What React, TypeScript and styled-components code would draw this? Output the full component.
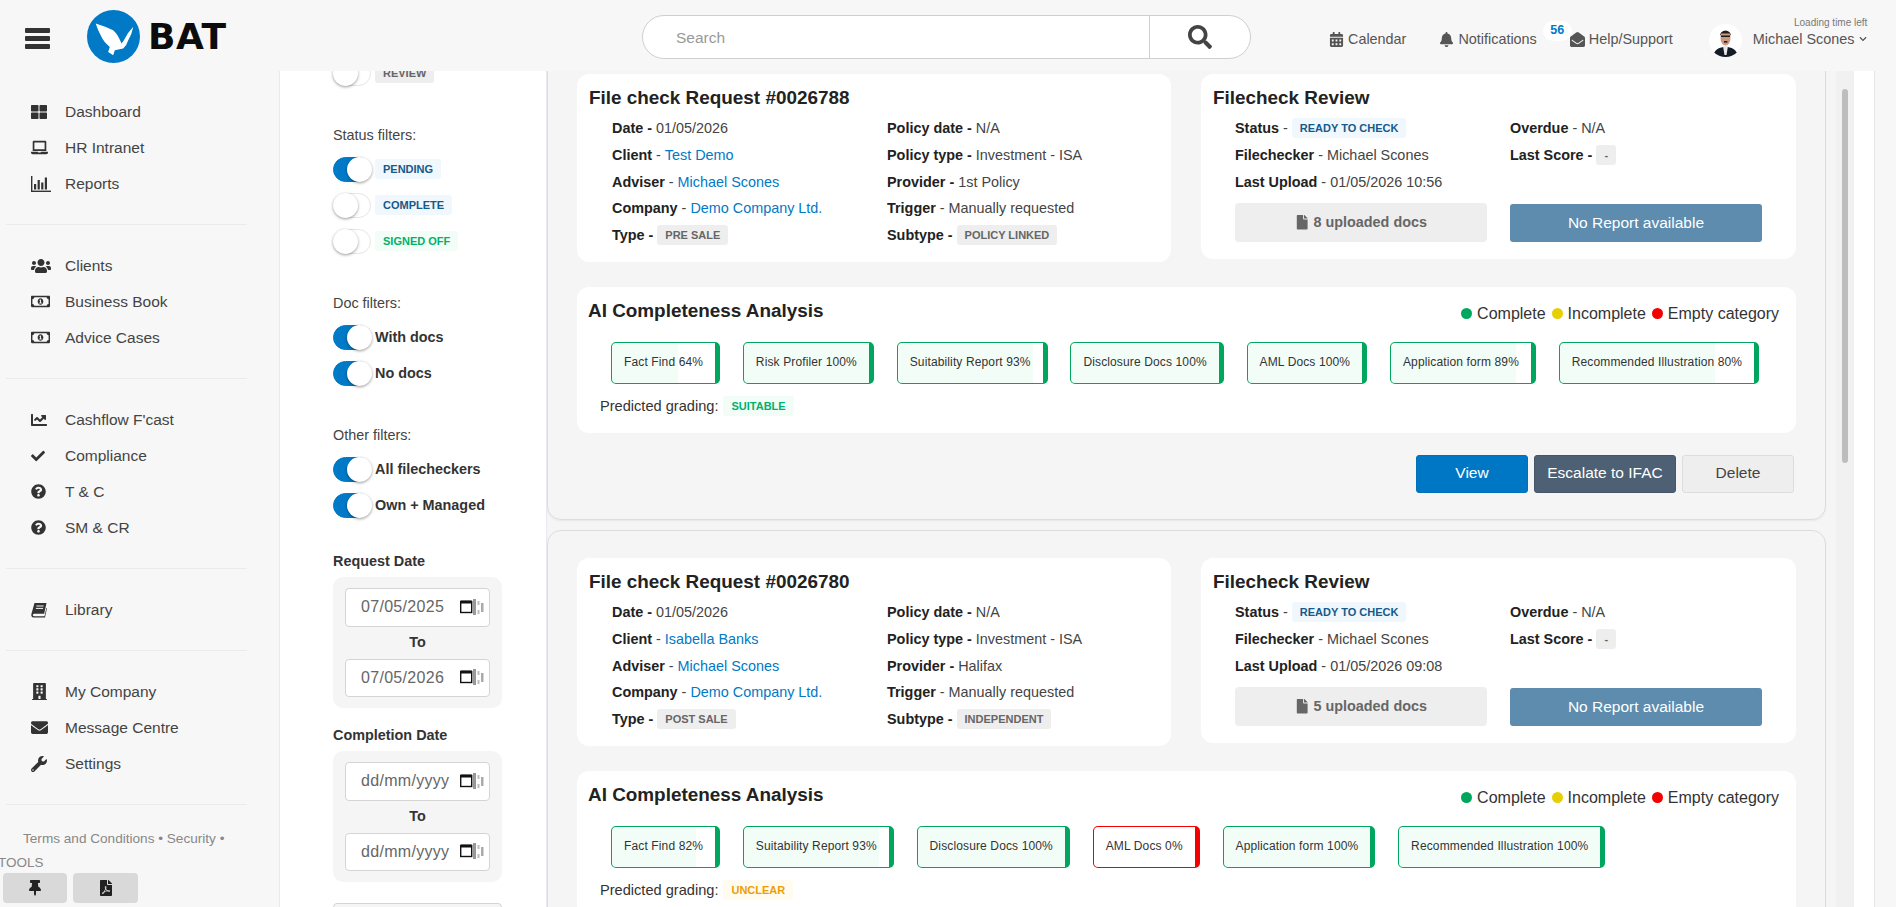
import React from "react";
import styled, { createGlobalStyle } from "styled-components";
import {
  FaThLarge,
  FaLaptop,
  FaUsers,
  FaRegMoneyBillAlt,
  FaChartLine,
  FaCheck,
  FaQuestionCircle,
  FaBuilding,
  FaEnvelope,
  FaWrench,
  FaThumbtack,
  FaFilePdf,
  FaSearch,
  FaCalendarAlt,
  FaBell,
  FaEnvelopeOpen,
  FaFile,
  FaChevronDown,
} from "react-icons/fa";

const GlobalStyle = createGlobalStyle`
  html, body {
    margin: 0;
    height: 100%;
    overflow: hidden;
    background: #f7f7f7;
    color: #333;
    font-family: "Liberation Sans", Arial, sans-serif;
  }
  * { box-sizing: border-box; }
`;

type Tone = "blue" | "green" | "grey" | "amber";

const toneColors: Record<Tone, { bg: string; fg: string }> = {
  blue: { bg: "#f0f7fd", fg: "#155a8a" },
  green: { bg: "#f2fdf7", fg: "#00b06b" },
  grey: { bg: "#eeeeee", fg: "#666666" },
  amber: { bg: "#fffbee", fg: "#eb9e08" },
};

const chipColors = { green: "#00a65d", red: "#f50000" };

function ReportsIcon() {
  return (
    <svg width="20" height="16" viewBox="0 0 20 16" fill="currentColor">
      <rect x="0" y="0" width="1.4" height="16" />
      <rect x="0" y="14.6" width="20" height="1.4" />
      <rect x="3" y="8" width="2.2" height="5.5" />
      <rect x="6.6" y="4" width="2.2" height="9.5" />
      <rect x="10.2" y="6.5" width="2.2" height="7" />
      <rect x="13.8" y="1.5" width="2.2" height="12" />
    </svg>
  );
}

function BookIcon() {
  return (
    <svg width="16" height="16" viewBox="0 0 16 16" fill="currentColor">
      <path d="M3.5 1 L15.5 1 L13.2 11.8 L3 11.8 C1.4 11.8 1.4 14.2 3 14.2 L13.5 14.2 L15.4 6 L16 6 L14 15.5 L2.8 15.5 C0.6 15.5 0 13.8 0.4 12 Z" />
      <path d="M5.4 4 H12.6 M4.9 6.4 H12.1" stroke="#f7f7f7" strokeWidth="1" />
    </svg>
  );
}

function LogoMark() {
  return (
    <svg width="53" height="53" viewBox="0 0 158 158">
      <circle cx="79" cy="79" r="79" fill="#0079c6" />
      <path
        d="M26 40 Q52 48 78 60 Q92 72 103 100 L110 90 Q122 66 138 50 Q134 72 123 90 Q118 106 108 115 L83 120 L78 135 L63 125 L68 110 Q50 96 43 80 Q32 60 26 40 Z"
        fill="#ffffff"
      />
    </svg>
  );
}

function Portrait() {
  return (
    <svg width="33" height="33" viewBox="0 0 33 33">
      <clipPath id="portrait-clip">
        <circle cx="16.5" cy="16.5" r="16.5" />
      </clipPath>
      <g clipPath="url(#portrait-clip)">
        <rect width="33" height="33" fill="#ffffff" />
        <path d="M4 33 C5 25 11 23 16.5 23 C22 23 28 25 29 33 Z" fill="#141c26" />
        <path d="M14 22 L19 22 L17.5 31 L15.5 31 Z" fill="#e8e8e8" />
        <ellipse cx="16.5" cy="14" rx="5" ry="7.5" fill="#c99a80" />
        <path d="M11 12 C11 5 22 5 22 12 L20.5 9.5 L12.5 9.5 Z" fill="#2a1c16" />
        <rect x="12" y="11.5" width="9" height="1.5" fill="#1a1a1a" />
        <rect x="15" y="17" width="3.4" height="1.6" fill="#301812" />
      </g>
    </svg>
  );
}

function CalendarGlyph() {
  return (
    <svg width="24" height="17" viewBox="0 0 24 17">
      <rect x="0.7" y="2.5" width="11" height="11" fill="none" stroke="#111" strokeWidth="1.4" />
      <rect x="0.7" y="1.5" width="11" height="3" fill="#111" />
      <rect x="13" y="0" width="3" height="16" fill="#999" />
      <rect x="17.5" y="2" width="2" height="4" fill="#bbb" />
      <rect x="17.5" y="11" width="2" height="4" fill="#bbb" />
      <rect x="21" y="4" width="2.5" height="9" fill="#aaa" />
    </svg>
  );
}

const Page = styled.div`
  display: flex;
  flex-direction: column;
  height: 100vh;
  overflow: hidden;
`;

const Header = styled.header`
  display: grid;
  grid-template-columns: 642px 609px 1fr;
  height: 71px;
  flex: none;
`;

const Brand = styled.div`
  display: flex;
  align-items: flex-start;
  padding: 10px 0 0 25px;
`;

const Burger = styled.button`
  display: flex;
  flex-direction: column;
  gap: 3px;
  width: 25px;
  margin-top: 18px;
  padding: 0;
  border: 0;
  background: none;

  span {
    height: 5px;
    background: #333;
    border-radius: 1px;
  }
`;

const LogoLink = styled.div`
  display: flex;
  margin-left: 37px;
`;

const LogoWord = styled.span`
  margin: 6px 0 0 8px;
  font-family: "DejaVu Sans", sans-serif;
  font-size: 36px;
  letter-spacing: 0.5px;
  line-height: 42px;
  font-weight: 700;
  color: #0c0c0c;
`;

const SearchBar = styled.div`
  display: flex;
  height: 44px;
  margin-top: 15px;
  border: 1px solid #cfcfcf;
  border-radius: 22px;
  background: #fff;
`;

const SearchField = styled.div`
  flex: 1;
  display: flex;
  align-items: center;
  padding: 1px 0 0 33px;
  font-size: 15.5px;
  color: #999;
`;

const SearchButton = styled.div`
  display: flex;
  align-items: center;
  justify-content: center;
  width: 101px;
  border-left: 1px solid #cfcfcf;
  color: #444;
  font-size: 24px;
`;

const TopNav = styled.nav`
  display: flex;
  align-items: flex-start;
  gap: 33px;
  padding: 29px 0 0 78px;
`;

const TopLink = styled.a`
  position: relative;
  display: flex;
  align-items: center;
  gap: 4px;
  font-size: 14.4px;
  line-height: 20px;
  color: #555;

  svg {
    font-size: 15px;
  }
`;

const CountBadge = styled.span`
  position: absolute;
  top: -8px;
  right: -35px;
  width: 29px;
  height: 20px;
  border-radius: 10px;
  background: #fff;
  text-align: center;
  font-size: 12.5px;
  font-weight: 700;
  line-height: 19px;
  color: #0079c6;
`;

const UserBox = styled.div`
  display: flex;
  align-items: flex-start;
  gap: 11px;
  margin: -5px 0 0 3px;
`;

const UserText = styled.div`
  display: flex;
  flex-direction: column;
  align-items: flex-end;
  margin-top: -7px;
`;

const LoadingNote = styled.span`
  font-size: 10px;
  line-height: 12px;
  color: #777;
`;

const UserName = styled.span`
  display: flex;
  align-items: center;
  gap: 5px;
  font-size: 14.4px;
  line-height: 20px;
  color: #555;

  svg {
    font-size: 8px;
  }
`;

const Body = styled.div`
  flex: 1;
  display: flex;
  min-height: 0;
`;

const Sidebar = styled.aside`
  display: flex;
  flex-direction: column;
  width: 279px;
  flex: none;
`;

const SideNav = styled.div`
  flex: 1;
  min-height: 0;
  overflow: hidden;
  padding-top: 22px;
`;

const NavSection = styled.div`
  margin-right: 32px;
  margin-left: 6px;
  padding-bottom: 23px;
  margin-bottom: 22px;
  border-bottom: 1px solid #ebebeb;
`;

const NavRow = styled.a`
  display: flex;
  align-items: center;
  height: 36px;
  padding: 1px 0 0 25px;
  font-size: 15.5px;
  color: #444;
`;

const NavIcon = styled.span<{ $size: number }>`
  display: flex;
  align-items: center;
  width: 34px;
  flex: none;
  font-size: ${(p) => p.$size}px;
  color: #333;
`;

const SideTerms = styled.p`
  margin: 0;
  padding: 0 40px 0 23px;
  font-size: 13.6px;
  line-height: 24px;
  color: #888;
`;

const Tools = styled.div`
  height: 54px;
  flex: none;
`;

const ToolsLabel = styled.div`
  margin-left: -2px;
  font-size: 13.5px;
  line-height: 20px;
  color: #888;
`;

const ToolRow = styled.div`
  display: flex;
  gap: 6px;
  padding-left: 3px;
`;

const ToolButton = styled.button<{ $width: number }>`
  display: flex;
  align-items: center;
  justify-content: center;
  width: ${(p) => p.$width}px;
  height: 30px;
  border: 0;
  border-radius: 4px;
  background: #d9d9d9;
  color: #222;
  font-size: 16px;
`;

const FilterPanel = styled.section`
  width: 268px;
  flex: none;
  overflow: hidden;
  padding-left: 53px;
  background: #fff;
  border-left: 1px solid #e8eaef;
  border-right: 1px solid #e8eaef;
`;

const FilterScroll = styled.div`
  display: flex;
  flex-direction: column;
  width: 169px;
  margin-top: -16px;
`;

const FilterTitle = styled.div<{ $gap: number }>`
  margin: ${(p) => p.$gap}px 0 6px;
  font-size: 14.4px;
  line-height: 20px;
  color: #444;
`;

const FilterRow = styled.div`
  display: flex;
  align-items: center;
  gap: 4px;
  height: 36px;
  font-size: 14.4px;
  font-weight: 700;
  color: #333;
  white-space: nowrap;
`;

const Switch = styled.span<{ $on?: boolean }>`
  position: relative;
  display: block;
  width: 38px;
  height: 25px;
  flex: none;
  border-radius: 13px;
  border: 1px solid ${(p) => (p.$on ? "#0079c6" : "#e6e6e6")};
  background: ${(p) => (p.$on ? "#0079c6" : "#fff")};

  &::after {
    content: "";
    position: absolute;
    top: -1px;
    left: ${(p) => (p.$on ? "13px" : "-1px")};
    width: 25px;
    height: 25px;
    border-radius: 50%;
    background: #fff;
    box-shadow: 0 1px 3px rgba(0, 0, 0, 0.4);
  }
`;

const Pill = styled.span<{ $tone: Tone }>`
  display: inline-flex;
  align-items: center;
  height: 20px;
  padding: 0 8px;
  border-radius: 3px;
  background: ${(p) => toneColors[p.$tone].bg};
  color: ${(p) => toneColors[p.$tone].fg};
  font-size: 11px;
  font-weight: 700;
`;

const DateTitle = styled.div<{ $gap: number }>`
  margin: ${(p) => p.$gap}px 0 6px;
  font-size: 14.4px;
  line-height: 20px;
  font-weight: 700;
  color: #333;
`;

const DateBox = styled.div`
  display: flex;
  flex-direction: column;
  height: 131px;
  padding: 11px 12px;
  border-radius: 10px;
  background: #f5f5f5;
`;

const DateField = styled.div`
  display: flex;
  align-items: center;
  justify-content: space-between;
  height: 38.5px;
  padding: 0 5px 0 15px;
  border: 1px solid #d4d4d4;
  border-radius: 4px;
  background: #fff;
  font-size: 16px;
  letter-spacing: 0.3px;
  color: #666;
`;

const DateTo = styled.div`
  height: 32px;
  text-align: center;
  font-size: 14.4px;
  font-weight: 700;
  line-height: 31px;
  color: #333;
`;

const NextField = styled.div`
  height: 40px;
  margin-top: 21px;
  border: 1px solid #d4d4d4;
  border-radius: 4px;
  background: #f5f5f5;
`;

const Main = styled.main`
  flex: 1;
  min-width: 0;
  overflow: hidden;
  background: #f5f5f5;
  padding: 0 10px 0 0;
`;

const Request = styled.article`
  margin-bottom: 10px;
  padding: 26px 29px;
  height: 473px;
  border: 1px solid #dcdcdc;
  border-radius: 14px;
  box-shadow: 0 1px 2px rgba(0, 0, 0, 0.06);

  &:first-child {
    margin-top: -24px;
  }

  & + & {
    padding-top: 27px;
  }
`;

const TopCards = styled.div`
  display: flex;
  align-items: flex-start;
  justify-content: space-between;
`;

const Card = styled.div<{ $width: number; $height: number }>`
  width: ${(p) => p.$width}px;
  height: ${(p) => p.$height}px;
  padding: 12px 12px 0;
  border-radius: 12px;
  background: #fff;
`;

const CardTitle = styled.h3`
  margin: 0;
  font-size: 18.9px;
  line-height: 24px;
  font-weight: 700;
  color: #222;
`;

const InfoGrid = styled.div<{ $indent: number }>`
  display: grid;
  grid-template-columns: 275px 1fr;
  grid-auto-rows: 26.67px;
  margin: 5px 0 0 ${(p) => p.$indent}px;
`;

const Info = styled.div`
  display: flex;
  align-items: center;
  gap: 4px;
  font-size: 14.4px;
  color: #444;
  white-space: nowrap;

  b {
    color: #222;
  }
`;

const PersonLink = styled.a`
  color: #0079c6;
`;

const ReviewButtons = styled.div`
  display: grid;
  grid-template-columns: 252px 252px;
  gap: 23px;
  margin: 8px 0 0 22px;
`;

const DocsButton = styled.div`
  display: flex;
  align-items: center;
  justify-content: center;
  gap: 4px;
  height: 39px;
  border-radius: 4px;
  background: #eeeeee;
  color: #666;
  font-size: 14.4px;
  font-weight: 700;
`;

const ReportButton = styled.div`
  display: flex;
  align-items: center;
  justify-content: center;
  height: 38px;
  margin-top: 1px;
  border-radius: 3px;
  background: #5d8cae;
  color: #fff;
  font-size: 15.5px;
`;

const AiCard = styled.div`
  height: 146px;
  margin-top: 25px;
  padding: 12px 17px 0 11px;
  border-radius: 12px;
  background: #fff;
`;

const AiHead = styled.div`
  display: flex;
  justify-content: space-between;
`;

const Legend = styled.div`
  display: flex;
  align-items: center;
  gap: 6px;
  padding-top: 5px;
  font-size: 16px;
  color: #333;
`;

const LegendItem = styled.span<{ $color: string }>`
  display: flex;
  align-items: center;
  gap: 5px;

  &::before {
    content: "";
    width: 11px;
    height: 11px;
    border-radius: 50%;
    background: ${(p) => p.$color};
  }
`;

const ChipRow = styled.div`
  display: flex;
  gap: 22.8px;
  margin: 19px 0 0 23px;
`;

const Chip = styled.div<{ $pct: number; $tone: "green" | "red" }>`
  display: flex;
  align-items: center;
  height: 42px;
  padding: 0 12px 2px;
  border: 1.5px solid ${(p) => chipColors[p.$tone]};
  border-right-width: 5px;
  border-radius: 5px;
  background: linear-gradient(
    to right,
    #f2fdf7 ${(p) => p.$pct}%,
    #ffffff ${(p) => p.$pct}%
  );
  font-size: 12px;
  letter-spacing: 0.13px;
  color: #333;
  white-space: nowrap;
`;

const Grading = styled.div`
  display: flex;
  align-items: center;
  gap: 5px;
  height: 20px;
  margin: 12px 0 0 12px;
  font-size: 14.6px;
  color: #333;
`;

const Actions = styled.div`
  display: flex;
  justify-content: flex-end;
  gap: 6px;
  margin: 22px 2px 0 0;
`;

const ActionButton = styled.button<{ $kind: "view" | "escalate" | "delete"; $width: number }>`
  width: ${(p) => p.$width}px;
  height: 38px;
  padding: 0 0 2px;
  border-radius: 3px;
  border: 1px solid
    ${(p) => (p.$kind === "view" ? "#0070b8" : p.$kind === "escalate" ? "#46566a" : "#dddddd")};
  background: ${(p) =>
    p.$kind === "view" ? "#0077c5" : p.$kind === "escalate" ? "#4e6074" : "#eeeeee"};
  color: ${(p) => (p.$kind === "delete" ? "#444" : "#fff")};
  font-family: inherit;
  font-size: 15.5px;
`;

const ScrollTrack = styled.div`
  width: 18px;
  flex: none;
  padding: 18px 6px 0;
  background: #f1f1f1;
`;

const ScrollThumb = styled.div`
  height: 374px;
  border-radius: 3px;
  background: #bdbdbd;
`;

const ScrollGutter = styled.div`
  width: 21px;
  flex: none;
  background: #fff;
  border-right: 1px solid #e6e6e6;
`;

const RightEdge = styled.div`
  width: 21px;
  flex: none;
`;

const navGroups: { icon: React.ReactNode; label: string; size: number }[][] = [
  [
    { icon: <FaThLarge />, label: "Dashboard", size: 16 },
    { icon: <FaLaptop />, label: "HR Intranet", size: 17 },
    { icon: <ReportsIcon />, label: "Reports", size: 17 },
  ],
  [
    { icon: <FaUsers />, label: "Clients", size: 20 },
    { icon: <FaRegMoneyBillAlt />, label: "Business Book", size: 19 },
    { icon: <FaRegMoneyBillAlt />, label: "Advice Cases", size: 19 },
  ],
  [
    { icon: <FaChartLine />, label: "Cashflow F'cast", size: 16 },
    { icon: <FaCheck />, label: "Compliance", size: 14 },
    { icon: <FaQuestionCircle />, label: "T & C", size: 15 },
    { icon: <FaQuestionCircle />, label: "SM & CR", size: 15 },
  ],
  [{ icon: <BookIcon />, label: "Library", size: 16 }],
  [
    { icon: <FaBuilding />, label: "My Company", size: 17 },
    { icon: <FaEnvelope />, label: "Message Centre", size: 17 },
    { icon: <FaWrench />, label: "Settings", size: 16 },
  ],
];

type ChipData = { label: string; pct: number; tone?: "green" | "red" };

const requests: {
  id: string;
  client: string;
  provider: string;
  type: string;
  subtype: string;
  upload: string;
  docs: number;
  grade: string;
  gradeTone: Tone;
  chips: ChipData[];
}[] = [
  {
    id: "0026788",
    client: "Test Demo",
    provider: "1st Policy",
    type: "PRE SALE",
    subtype: "POLICY LINKED",
    upload: "01/05/2026 10:56",
    docs: 8,
    grade: "SUITABLE",
    gradeTone: "green",
    chips: [
      { label: "Fact Find 64%", pct: 64 },
      { label: "Risk Profiler 100%", pct: 100 },
      { label: "Suitability Report 93%", pct: 93 },
      { label: "Disclosure Docs 100%", pct: 100 },
      { label: "AML Docs 100%", pct: 100 },
      { label: "Application form 89%", pct: 89 },
      { label: "Recommended Illustration 80%", pct: 80 },
    ],
  },
  {
    id: "0026780",
    client: "Isabella Banks",
    provider: "Halifax",
    type: "POST SALE",
    subtype: "INDEPENDENT",
    upload: "01/05/2026 09:08",
    docs: 5,
    grade: "UNCLEAR",
    gradeTone: "amber",
    chips: [
      { label: "Fact Find 82%", pct: 82 },
      { label: "Suitability Report 93%", pct: 93 },
      { label: "Disclosure Docs 100%", pct: 100 },
      { label: "AML Docs 0%", pct: 0, tone: "red" },
      { label: "Application form 100%", pct: 100 },
      { label: "Recommended Illustration 100%", pct: 100 },
    ],
  },
];

function DateRange({ from, to }: { from: string; to: string }) {
  return (
    <DateBox>
      <DateField>
        {from}
        <CalendarGlyph />
      </DateField>
      <DateTo>To</DateTo>
      <DateField>
        {to}
        <CalendarGlyph />
      </DateField>
    </DateBox>
  );
}

function RequestCard({ data }: { data: (typeof requests)[number] }) {
  return (
    <Request>
      <TopCards>
        <Card $width={594} $height={188}>
          <CardTitle>File check Request #{data.id}</CardTitle>
          <InfoGrid $indent={23}>
            <Info>
              <b>Date -</b> 01/05/2026
            </Info>
            <Info>
              <b>Policy date -</b> N/A
            </Info>
            <Info>
              <b>Client</b> - <PersonLink>{data.client}</PersonLink>
            </Info>
            <Info>
              <b>Policy type -</b> Investment - ISA
            </Info>
            <Info>
              <b>Adviser</b> - <PersonLink>Michael Scones</PersonLink>
            </Info>
            <Info>
              <b>Provider -</b> {data.provider}
            </Info>
            <Info>
              <b>Company</b> - <PersonLink>Demo Company Ltd.</PersonLink>
            </Info>
            <Info>
              <b>Trigger</b> - Manually requested
            </Info>
            <Info>
              <b>Type -</b> <Pill $tone="grey">{data.type}</Pill>
            </Info>
            <Info>
              <b>Subtype -</b> <Pill $tone="grey">{data.subtype}</Pill>
            </Info>
          </InfoGrid>
        </Card>
        <Card $width={595} $height={185}>
          <CardTitle>Filecheck Review</CardTitle>
          <InfoGrid $indent={22}>
            <Info>
              <b>Status</b> - <Pill $tone="blue">READY TO CHECK</Pill>
            </Info>
            <Info>
              <b>Overdue</b> - N/A
            </Info>
            <Info>
              <b>Filechecker</b> - Michael Scones
            </Info>
            <Info>
              <b>Last Score -</b> <Pill $tone="grey">-</Pill>
            </Info>
            <Info>
              <b>Last Upload</b> - {data.upload}
            </Info>
          </InfoGrid>
          <ReviewButtons>
            <DocsButton>
              <FaFile />
              {data.docs} uploaded docs
            </DocsButton>
            <ReportButton>No Report available</ReportButton>
          </ReviewButtons>
        </Card>
      </TopCards>

      <AiCard>
        <AiHead>
          <CardTitle>AI Completeness Analysis</CardTitle>
          <Legend>
            <LegendItem $color="#00a65d">Complete</LegendItem>
            <LegendItem $color="#e8d000">Incomplete</LegendItem>
            <LegendItem $color="#f50000">Empty category</LegendItem>
          </Legend>
        </AiHead>
        <ChipRow>
          {data.chips.map((chip) => (
            <Chip key={chip.label} $pct={chip.pct} $tone={chip.tone ?? "green"}>
              {chip.label}
            </Chip>
          ))}
        </ChipRow>
        <Grading>
          Predicted grading: <Pill $tone={data.gradeTone}>{data.grade}</Pill>
        </Grading>
      </AiCard>

      <Actions>
        <ActionButton $kind="view" $width={112}>
          View
        </ActionButton>
        <ActionButton $kind="escalate" $width={142}>
          Escalate to IFAC
        </ActionButton>
        <ActionButton $kind="delete" $width={112}>
          Delete
        </ActionButton>
      </Actions>
    </Request>
  );
}

export default function App() {
  return (
    <Page>
      <GlobalStyle />
      <Header>
        <Brand>
          <Burger aria-label="Menu">
            <span />
            <span />
            <span />
          </Burger>
          <LogoLink>
            <LogoMark />
            <LogoWord>BAT</LogoWord>
          </LogoLink>
        </Brand>
        <SearchBar>
          <SearchField>Search</SearchField>
          <SearchButton>
            <FaSearch />
          </SearchButton>
        </SearchBar>
        <TopNav>
          <TopLink>
            <FaCalendarAlt />
            Calendar
          </TopLink>
          <TopLink>
            <FaBell />
            Notifications
            <CountBadge>56</CountBadge>
          </TopLink>
          <TopLink>
            <FaEnvelopeOpen />
            Help/Support
          </TopLink>
          <UserBox>
            <Portrait />
            <UserText>
              <LoadingNote>Loading time left</LoadingNote>
              <UserName>
                Michael Scones
                <FaChevronDown />
              </UserName>
            </UserText>
          </UserBox>
        </TopNav>
      </Header>

      <Body>
        <Sidebar>
          <SideNav>
            {navGroups.map((group, i) => (
              <NavSection key={i}>
                {group.map((item) => (
                  <NavRow key={item.label}>
                    <NavIcon $size={item.size}>{item.icon}</NavIcon>
                    {item.label}
                  </NavRow>
                ))}
              </NavSection>
            ))}
            <SideTerms>
              Terms and Conditions • Security • Data protection • Copyright and
              Legal
            </SideTerms>
          </SideNav>
          <Tools>
            <ToolsLabel>TOOLS</ToolsLabel>
            <ToolRow>
              <ToolButton $width={64}>
                <FaThumbtack />
              </ToolButton>
              <ToolButton $width={65}>
                <FaFilePdf />
              </ToolButton>
            </ToolRow>
          </Tools>
        </Sidebar>

        <FilterPanel>
          <FilterScroll>
            <FilterRow>
              <Switch />
              <Pill $tone="grey">REVIEW</Pill>
            </FilterRow>

            <FilterTitle $gap={34}>Status filters:</FilterTitle>
            <FilterRow>
              <Switch $on />
              <Pill $tone="blue">PENDING</Pill>
            </FilterRow>
            <FilterRow>
              <Switch />
              <Pill $tone="blue">COMPLETE</Pill>
            </FilterRow>
            <FilterRow>
              <Switch />
              <Pill $tone="green">SIGNED OFF</Pill>
            </FilterRow>

            <FilterTitle $gap={34}>Doc filters:</FilterTitle>
            <FilterRow>
              <Switch $on />
              With docs
            </FilterRow>
            <FilterRow>
              <Switch $on />
              No docs
            </FilterRow>

            <FilterTitle $gap={34}>Other filters:</FilterTitle>
            <FilterRow>
              <Switch $on />
              All filecheckers
            </FilterRow>
            <FilterRow>
              <Switch $on />
              Own + Managed
            </FilterRow>

            <DateTitle $gap={28}>Request Date</DateTitle>
            <DateRange from="07/05/2025" to="07/05/2026" />
            <DateTitle $gap={17}>Completion Date</DateTitle>
            <DateRange from="dd/mm/yyyy" to="dd/mm/yyyy" />
            <NextField />
          </FilterScroll>
        </FilterPanel>

        <Main>
          {requests.map((request) => (
            <RequestCard key={request.id} data={request} />
          ))}
        </Main>

        <ScrollTrack>
          <ScrollThumb />
        </ScrollTrack>
        <ScrollGutter />
        <RightEdge />
      </Body>
    </Page>
  );
}
